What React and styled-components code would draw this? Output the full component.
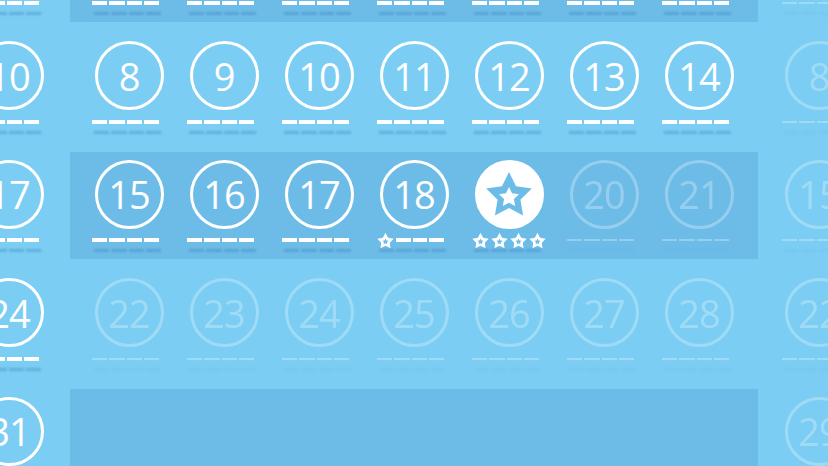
import React from "react";
import styled, { createGlobalStyle } from "styled-components";

const BG = "#7bcdf3";
const BAND = "#6dbce8";

const GlobalStyle = createGlobalStyle`
  html, body { margin: 0; padding: 0; background: ${BG}; }
  body { font-family: "Open Sans", "Noto Sans", sans-serif; }
`;

// star polygon points around (cx, cy)
const starPoints = (cx, cy, R, r) => {
  const pts = [];
  for (let i = 0; i < 10; i++) {
    const rad = i % 2 === 0 ? R : r;
    const a = (Math.PI / 5) * i - Math.PI / 2;
    pts.push(`${(cx + rad * Math.cos(a)).toFixed(2)},${(cy + rad * Math.sin(a)).toFixed(2)}`);
  }
  return pts.join(" ");
};

const SmallStar = () => (
  <svg width="17" height="17" viewBox="0 0 17 17">
    <polygon points={starPoints(8.5, 9.3, 8.6, 4.5)} fill="#fff" />
    <polygon points={starPoints(8.5, 9.7, 3.2, 1.6)} fill={BAND} />
  </svg>
);

const BigStar = () => (
  <svg width="52" height="52" viewBox="0 0 52 52">
    <polygon points={starPoints(26, 28, 24, 12)} fill={BAND} />
    <polygon points={starPoints(26, 29.5, 10.5, 5.2)} fill="#fff" />
  </svg>
);

const Page = styled.div`
  width: 828px;
  height: 466px;
  overflow: hidden;
  background: ${BG};
`;

const Strip = styled.div`
  display: flex;
  gap: 2px;
  margin-left: -620px;
  margin-top: -85px;
`;

const Month = styled.div`
  flex: 0 0 688px;
  display: flex;
  flex-direction: column;
  gap: 11.5px;
`;

const Week = styled.div`
  height: 107px;
  display: grid;
  grid-template-columns: repeat(7, 95px);
  padding: 0 11.5px;
  background: ${(p) => (p.$band ? BAND : "transparent")};
`;

const Day = styled.div`
  display: flex;
  flex-direction: column;
  align-items: center;
  padding-top: 7.5px;
  opacity: ${(p) => (p.$faded ? 0.28 : 1)};
`;

const Ring = styled.div`
  width: 69px;
  height: 69px;
  box-sizing: border-box;
  border-radius: 50%;
  border: 3px solid #fff;
  background: ${(p) => (p.$filled ? "#fff" : "transparent")};
  display: flex;
  align-items: center;
  justify-content: center;
  color: #fff;
  font-size: 38px;
  line-height: 1;
  font-weight: 400;
  letter-spacing: -1px;
`;

const Dashes = styled.div`
  width: 67px;
  height: 4px;
  margin: 9.5px 7px 0 0;
  display: flex;
  align-items: center;
  gap: 2px;
`;

const Dash = styled.span`
  flex: 1;
  height: ${(p) => (p.$thin ? 2 : 4)}px;
  background: #fff;
`;

const StarSlot = styled.span`
  flex: 1;
  display: flex;
  justify-content: center;
  align-items: center;
  height: 4px;
`;

const Shadow = styled.div`
  width: 67px;
  height: 3px;
  margin: 7px 3px 0 0;
  display: flex;
  gap: 2px;
  filter: blur(1px);
`;

const ShadowBit = styled.span`
  flex: 1;
  background: rgba(40, 110, 170, ${(p) => (p.$thin ? 0.18 : 0.3)});
`;

const Cell = ({ day, faded, stars = 0, special }) => {
  if (!day) return <Day />;
  return (
    <Day $faded={faded}>
      <Ring $filled={special}>{special ? <BigStar /> : day}</Ring>
      <Dashes>
        {[0, 1, 2, 3].map((i) =>
          i < stars ? (
            <StarSlot key={i}>
              <SmallStar />
            </StarSlot>
          ) : (
            <Dash key={i} $thin={faded} />
          )
        )}
      </Dashes>
      <Shadow>
        {[0, 1, 2, 3].map((i) => (
          <ShadowBit key={i} $thin={faded} />
        ))}
      </Shadow>
    </Day>
  );
};

const rows = [0, 1, 2, 3, 4];
const cols = [0, 1, 2, 3, 4, 5, 6];

const PrevMonth = () => (
  <Month>
    {rows.map((r) => (
      <Week key={r}>
        {cols.map((c) => {
          const d = r * 7 + c - 3;
          return <Cell key={c} day={d >= 1 && d <= 31 ? d : null} />;
        })}
      </Week>
    ))}
  </Month>
);

const CurrentMonth = () => (
  <Month>
    {rows.map((r) => (
      <Week key={r} $band={r % 2 === 0}>
        {cols.map((c) => {
          const d = r * 7 + c + 1;
          if (d > 28) return <Cell key={c} />;
          return (
            <Cell
              key={c}
              day={d}
              faded={d >= 20}
              stars={d === 18 ? 1 : d === 19 ? 4 : 0}
              special={d === 19}
            />
          );
        })}
      </Week>
    ))}
  </Month>
);

const NextMonth = () => (
  <Month>
    {rows.map((r) => (
      <Week key={r}>
        {cols.map((c) => {
          const d = r * 7 + c + 1;
          return <Cell key={c} day={d <= 30 ? d : null} faded />;
        })}
      </Week>
    ))}
  </Month>
);

export default function App() {
  return (
    <>
      <GlobalStyle />
      <Page>
        <Strip>
          <PrevMonth />
          <CurrentMonth />
          <NextMonth />
        </Strip>
      </Page>
    </>
  );
}
